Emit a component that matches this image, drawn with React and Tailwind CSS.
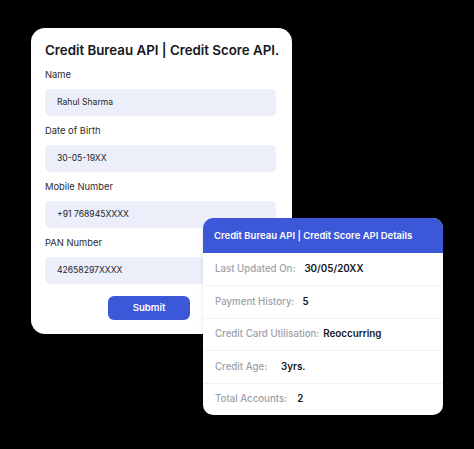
import React from 'react';

const fields = [
  { label: 'Name', value: 'Rahul Sharma' },
  { label: 'Date of Birth', value: '30-05-19XX' },
  { label: 'Mobile Number', value: '+91 768945XXXX' },
  { label: 'PAN Number', value: '42658297XXXX' },
];

const details = [
  { label: 'Last Updated On:', value: '30/05/20XX', gap: 'ml-[9px]' },
  { label: 'Payment History:', value: '5', gap: 'ml-[8px]' },
  { label: 'Credit Card Utilisation:', value: 'Reoccurring', gap: 'ml-[4px]' },
  { label: 'Credit Age:', value: '3yrs.', gap: 'ml-[14px]' },
  { label: 'Total Accounts:', value: '2', gap: 'ml-[10px]' },
];

export default function App() {
  return (
    <div
      className="w-[474px] h-[449px] bg-black relative overflow-hidden"
      style={{ fontFamily: 'Inter, "Noto Sans", sans-serif' }}
    >
      {/* Form card */}
      <div className="absolute left-[31px] top-[28px] w-[261px] h-[306px] bg-white rounded-[14px] pl-[14px] pr-[16px] pt-[14px] flex flex-col">
        <h1 className="text-[13.3px] font-semibold text-[#16171d] leading-[16px] h-[16px] whitespace-nowrap">
          Credit Bureau API | Credit Score API.
        </h1>
        <div className="mt-[2px] flex flex-col">
          {fields.map((f) => (
            <div key={f.label} className="flex flex-col mt-[9px]">
              <label className="text-[9.4px] text-[#2b2c33] leading-[12px] h-[12px] whitespace-nowrap">{f.label}</label>
              <div className="mt-[8px] h-[27px] bg-[#eceefa] rounded-[5px] flex items-center px-[12px] text-[8.6px] text-[#1e1f26] whitespace-nowrap">
                {f.value}
              </div>
            </div>
          ))}
        </div>
        <div className="flex mt-[12px]">
          <button className="ml-[63px] w-[82px] h-[24px] rounded-[6px] bg-[#3d57d9] text-white text-[9.6px] font-semibold">
            Submit
          </button>
        </div>
      </div>

      {/* Details card */}
      <div className="absolute left-[203px] top-[218px] w-[240px] h-[197px] bg-white rounded-[10px] overflow-hidden shadow-md flex flex-col">
        <div className="h-[35px] shrink-0 bg-[#3d57d9] flex items-center pl-[11px] pt-[1px] text-white text-[9.5px] font-semibold whitespace-nowrap">
          Credit Bureau API | Credit Score API Details
        </div>
        <div className="flex flex-col pt-[1px]">
          {details.map((d, i) => (
            <div
              key={d.label}
              className={`h-[32.4px] flex items-center px-[12px] whitespace-nowrap ${i < details.length - 1 ? 'border-b border-[#f1f1f4]' : ''}`}
            >
              <span className="text-[#9d9fa8] font-medium text-[9.7px]">{d.label}</span>
              <span className={`text-[#15161c] font-semibold text-[9.8px] ${d.gap}`}>{d.value}</span>
            </div>
          ))}
        </div>
      </div>
    </div>
  );
}
